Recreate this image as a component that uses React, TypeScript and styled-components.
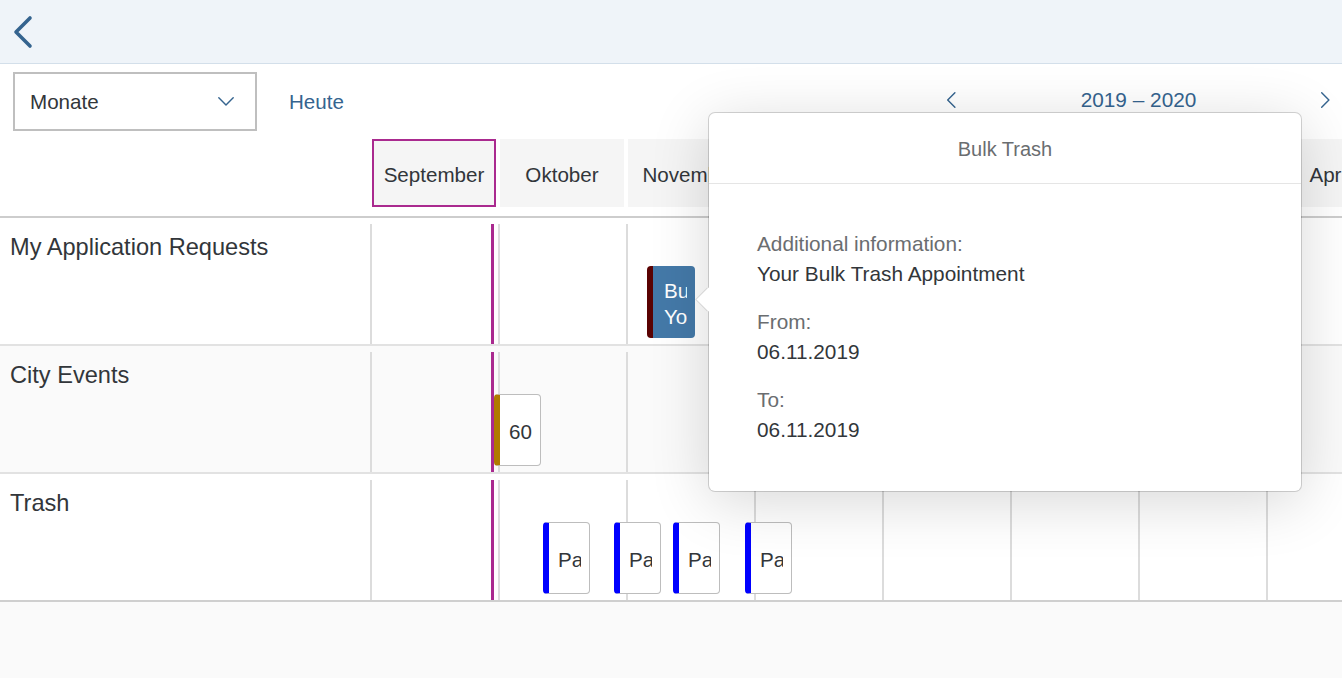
import React from 'react';
import styled, { createGlobalStyle } from 'styled-components';

const GlobalStyle = createGlobalStyle`
  html, body {
    margin: 0;
    padding: 0;
  }
  body {
    font-family: "Liberation Sans", Arial, sans-serif;
    color: #32363a;
    background: #fafafa;
  }
`;

const COL_W = 128;
const LABEL_W = 370;
const TODAY_OFFSET = 121;

const months = ['September', 'Oktober', 'November', 'Dezember', 'Januar', 'Februar', 'März', 'April'];

type Appt = { text: string[]; left: number; width: number; bar: string; fill?: string };

const rows: { title: string; shaded?: boolean; appts: Appt[] }[] = [
  {
    title: 'My Application Requests',
    appts: [{ text: ['Bulk Trash', 'Your Bulk Trash Appointment'], left: 277, width: 48, bar: '#5a0202', fill: '#4479a8' }],
  },
  {
    title: 'City Events',
    shaded: true,
    appts: [{ text: ['60'], left: 124, width: 47, bar: '#b07a00' }],
  },
  {
    title: 'Trash',
    appts: [
      { text: ['Paper'], left: 173, width: 47, bar: '#0000ff' },
      { text: ['Paper'], left: 244, width: 47, bar: '#0000ff' },
      { text: ['Paper'], left: 303, width: 47, bar: '#0000ff' },
      { text: ['Paper'], left: 375, width: 47, bar: '#0000ff' },
    ],
  },
];

const Page = styled.div`
  position: relative;
  width: 1342px;
  height: 678px;
  overflow: hidden;
  display: flex;
  flex-direction: column;
  background: #fff;
`;

const ShellBar = styled.header`
  flex: none;
  height: 63px;
  display: flex;
  align-items: center;
  padding-left: 11px;
  background: #eff4f9;
  border-bottom: 1px solid #d3dfea;
`;

const BackButton = styled.button`
  border: 0;
  background: none;
  padding: 0;
  display: flex;
  cursor: pointer;
`;

const Toolbar = styled.div`
  flex: none;
  height: 75px;
  display: flex;
  align-items: center;
  padding-left: 13px;
`;

const Select = styled.div`
  box-sizing: border-box;
  width: 244px;
  height: 59px;
  border: 2px solid #bfbfbf;
  display: flex;
  align-items: center;
  justify-content: space-between;
  padding: 0 20px 0 15px;
  font-size: 20.6px;
  color: #32363a;
`;

const TodayLink = styled.a`
  margin-left: 32px;
  font-size: 20.6px;
  color: #35648f;
  cursor: pointer;
`;

const YearNav = styled.div`
  margin-left: auto;
  width: 413px;
  display: flex;
  align-items: center;
  margin-top: -3px;
`;

const NavButton = styled.button<{ $w: number }>`
  flex: none;
  width: ${p => p.$w}px;
  border: 0;
  background: none;
  padding: 0;
  display: flex;
  justify-content: center;
  cursor: pointer;
`;

const YearLabel = styled.div`
  flex: 1;
  text-align: center;
  padding-right: 4px;
  font-size: 20.8px;
  color: #35648f;
`;

const MonthHeader = styled.div`
  flex: none;
  height: 77px;
  display: flex;
  border-bottom: 2px solid #cdcdcd;
`;

const Spacer = styled.div`
  flex: none;
  width: ${LABEL_W}px;
`;

const MonthSlot = styled.div`
  flex: none;
  width: ${COL_W}px;
  box-sizing: border-box;
  padding-left: 2px;
`;

const MonthCell = styled.div<{ $current?: boolean }>`
  box-sizing: border-box;
  width: 124px;
  height: 68px;
  padding-top: 3px;
  background: #f5f5f5;
  border: 2px solid ${p => (p.$current ? '#aa2a8f' : 'transparent')};
  display: flex;
  align-items: center;
  justify-content: center;
  font-size: 20.6px;
  white-space: nowrap;
  overflow: hidden;
`;

const Row = styled.div<{ $shaded?: boolean; $last?: boolean }>`
  flex: none;
  height: 126px;
  display: flex;
  background: ${p => (p.$shaded ? '#fafafa' : '#fff')};
  border-bottom: 2px solid ${p => (p.$last ? '#cfcfcf' : '#e2e2e2')};
`;

const RowLabel = styled.div`
  flex: none;
  width: ${LABEL_W}px;
  box-sizing: border-box;
  padding: 15px 0 0 10px;
  font-size: 23.6px;
  line-height: 28px;
`;

const Timeline = styled.div`
  position: relative;
  flex: none;
  display: flex;
`;

const Column = styled.div`
  flex: none;
  width: ${COL_W}px;
  box-sizing: border-box;
  margin-top: 6px;
  border-left: 2px solid #dcdcdc;
`;

const TodayLine = styled.div`
  position: absolute;
  top: 6px;
  bottom: 0;
  width: 3px;
  background: #aa2a8f;
`;

const Appointment = styled.div<{ $bar: string; $fill?: string }>`
  position: absolute;
  top: 48px;
  height: 72px;
  box-sizing: border-box;
  border-radius: 4px;
  border: ${p => (p.$fill ? '0' : '1px solid #bdbdbd')};
  border-left: 6px solid ${p => p.$bar};
  background: ${p => p.$fill || '#fff'};
  color: ${p => (p.$fill ? '#fff' : '#32363a')};
  padding: 3px 8px 0 ${p => (p.$fill ? 11 : 9)}px;
  display: flex;
  flex-direction: column;
  justify-content: center;
  font-size: 20.6px;
  line-height: 26px;
`;

const ApptLine = styled.div`
  overflow: hidden;
  white-space: nowrap;
`;

const Footer = styled.div`
  flex: 1;
  background: #fafafa;
`;

const Popover = styled.div`
  position: absolute;
  left: 709px;
  top: 113px;
  width: 592px;
  height: 378px;
  box-sizing: border-box;
  background: #fff;
  border-radius: 6px;
  box-shadow: 0 0 0 1px rgba(0, 0, 0, 0.16), 0 10px 60px rgba(0, 0, 0, 0.16);

  &::before {
    content: '';
    position: absolute;
    left: -9px;
    top: 178px;
    width: 17px;
    height: 17px;
    background: #fff;
    transform: rotate(45deg);
    box-shadow: -1px 1px 0 rgba(0, 0, 0, 0.1);
  }
`;

const PopHeader = styled.div`
  position: relative;
  height: 71px;
  padding-top: 2px;
  box-sizing: border-box;
  display: flex;
  align-items: center;
  justify-content: center;
  border-bottom: 1px solid #e5e5e5;
  font-size: 20px;
  color: #6a6d70;
`;

const PopBody = styled.div`
  padding: 45px 48px;
  display: flex;
  flex-direction: column;
  gap: 18px;
`;

const Field = styled.div`
  font-size: 20.8px;
  line-height: 30px;
`;

const FieldLabel = styled.div`
  color: #6a6d70;
`;

const FieldValue = styled.div`
  color: #32363a;
`;

const Chevron = ({ dir, size, color }: { dir: 'left' | 'right' | 'down'; size: number; color: string }) => {
  const d = dir === 'left' ? 'M11 2 L3 10 L11 18' : dir === 'right' ? 'M3 2 L11 10 L3 18' : 'M2 3 L10 11 L18 3';
  const vb = dir === 'down' ? '0 0 20 14' : '0 0 14 20';
  return (
    <svg width={dir === 'down' ? size : size * 0.7} height={dir === 'down' ? size * 0.7 : size} viewBox={vb}>
      <path d={d} fill="none" stroke={color} strokeWidth={1.6} strokeLinecap="round" strokeLinejoin="round" />
    </svg>
  );
};

const App = () => {
  return (
    <>
      <GlobalStyle />
      <Page>
        <ShellBar>
          <BackButton aria-label="Back">
            <svg width="22" height="34" viewBox="0 0 22 34">
              <path d="M19 3 L5 17 L19 31" fill="none" stroke="#35648f" strokeWidth="3.6" strokeLinecap="round" strokeLinejoin="round" />
            </svg>
          </BackButton>
        </ShellBar>

        <Toolbar>
          <Select>
            Monate
            <Chevron dir="down" size={18} color="#35648f" />
          </Select>
          <TodayLink>Heute</TodayLink>
          <YearNav>
            <NavButton $w={44}>
              <Chevron dir="left" size={18} color="#35648f" />
            </NavButton>
            <YearLabel>2019 – 2020</YearLabel>
            <NavButton $w={34}>
              <Chevron dir="right" size={18} color="#35648f" />
            </NavButton>
          </YearNav>
        </Toolbar>

        <MonthHeader>
          <Spacer />
          {months.map((m, i) => (
            <MonthSlot key={m}>
              <MonthCell $current={i === 0}>{m}</MonthCell>
            </MonthSlot>
          ))}
        </MonthHeader>

        {rows.map((r, ri) => (
          <Row key={r.title} $shaded={r.shaded} $last={ri === rows.length - 1}>
            <RowLabel>{r.title}</RowLabel>
            <Timeline>
              {months.map(m => (
                <Column key={m} />
              ))}
              <TodayLine style={{ left: TODAY_OFFSET }} />
              {r.appts.map((a, ai) => (
                <Appointment key={ai} $bar={a.bar} $fill={a.fill} style={{ left: a.left, width: a.width }}>
                  {a.text.map(t => (
                    <ApptLine key={t}>{t}</ApptLine>
                  ))}
                </Appointment>
              ))}
            </Timeline>
          </Row>
        ))}

        <Footer />

        <Popover>
          <PopHeader>Bulk Trash</PopHeader>
          <PopBody>
            <Field>
              <FieldLabel>Additional information:</FieldLabel>
              <FieldValue>Your Bulk Trash Appointment</FieldValue>
            </Field>
            <Field>
              <FieldLabel>From:</FieldLabel>
              <FieldValue>06.11.2019</FieldValue>
            </Field>
            <Field>
              <FieldLabel>To:</FieldLabel>
              <FieldValue>06.11.2019</FieldValue>
            </Field>
          </PopBody>
        </Popover>
      </Page>
    </>
  );
};

export default App;
